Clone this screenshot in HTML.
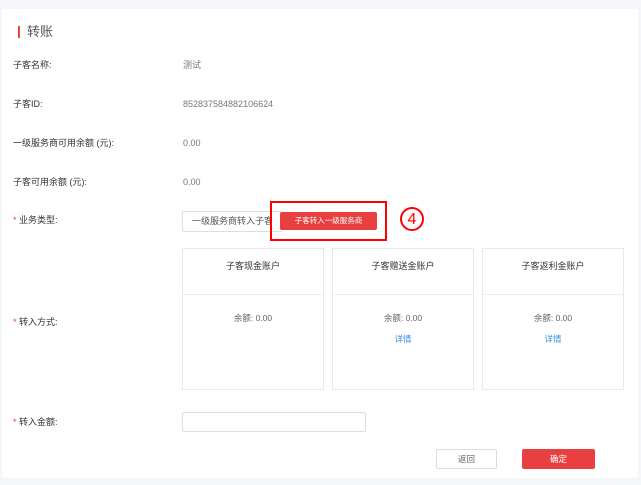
<!DOCTYPE html>
<html><head><meta charset="utf-8"><style>
body{margin:0;width:641px;height:485px;background:#f5f6fa;font-family:"Liberation Sans","Noto Sans CJK SC",sans-serif;position:relative;overflow:hidden}
.p{position:absolute;left:2px;top:9px;width:636px;height:469px;background:#fff}
.a{position:absolute;font-size:9px;color:#333;white-space:nowrap;line-height:12px}
.v{color:#777}
.r{color:#e84040}
.card{position:absolute;top:248px;width:142px;height:142px;border:1px solid #e8e8e8;box-sizing:border-box}
.card .h{height:45px;border-bottom:1px solid #eee;text-align:center;line-height:34px;font-size:9px;color:#333}
.card .b{text-align:center;font-size:8.5px;color:#666;padding-top:13px;line-height:21px}
.card .d{color:#3a8ee6}
.box{position:absolute;border:1px solid #ddd;border-radius:2px;box-sizing:border-box;background:#fff}
</style></head><body>
<div class="p"></div>
<div style="position:absolute;left:18px;top:26px;width:2px;height:12px;background:#e84040"></div>
<div class="a" style="left:27px;top:24px;font-size:13px;line-height:16px;color:#555">转账</div>
<div class="a" style="left:13px;top:59px">子客名称:</div><div class="a v" style="left:183px;top:59px">测试</div>
<div class="a" style="left:13px;top:98px">子客ID:</div><div class="a v" style="left:183px;top:98px">852837584882106624</div>
<div class="a" style="left:13px;top:137px">一级服务商可用余额 (元):</div><div class="a v" style="left:183px;top:137px">0.00</div>
<div class="a" style="left:13px;top:176px">子客可用余额 (元):</div><div class="a v" style="left:183px;top:176px">0.00</div>
<div class="a" style="left:13px;top:214px"><span class="r">* </span>业务类型:</div>
<div class="box" style="left:182px;top:211px;width:100px;height:21px"></div>
<div class="a" style="left:192px;top:215px;color:#555;width:80px;overflow:hidden">一级服务商转入子客</div>
<div style="position:absolute;left:280px;top:212px;width:97px;height:18px;background:#e84040;border-radius:2px;color:#fff;font-size:7.5px;text-align:center;line-height:18px">子客转入一级服务商</div>
<div style="position:absolute;left:270px;top:201px;width:117px;height:40px;border:2px solid #f00;box-sizing:border-box"></div>
<div style="position:absolute;left:400px;top:207px;width:24px;height:24px;border:2px solid #f00;border-radius:50%;box-sizing:border-box;color:#f00;font-size:16px;text-align:center;line-height:21px">4</div>
<div class="a" style="left:13px;top:316px"><span class="r">* </span>转入方式:</div>
<div class="card" style="left:182px"><div class="h">子客现金账户</div><div class="b">余额: 0.00</div></div>
<div class="card" style="left:332px"><div class="h">子客赠送金账户</div><div class="b">余额: 0.00<br><span class="d">详情</span></div></div>
<div class="card" style="left:482px"><div class="h">子客返利金账户</div><div class="b">余额: 0.00<br><span class="d">详情</span></div></div>
<div class="a" style="left:13px;top:416px"><span class="r">* </span>转入金额:</div>
<div class="box" style="left:182px;top:412px;width:184px;height:20px"></div>
<div class="box" style="left:436px;top:449px;width:61px;height:20px;font-size:8.5px;color:#666;text-align:center;line-height:18px">返回</div>
<div style="position:absolute;left:522px;top:449px;width:73px;height:20px;background:#e84040;border-radius:2px;color:#fff;font-size:8.5px;text-align:center;line-height:20px">确定</div>
</body></html>
